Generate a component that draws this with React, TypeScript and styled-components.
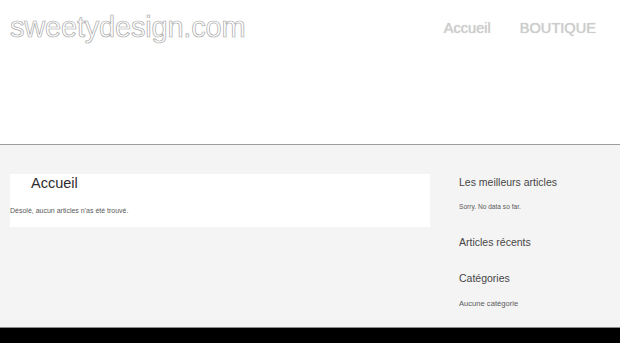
import React from "react";
import styled, { createGlobalStyle } from "styled-components";

const Global = createGlobalStyle`
  html, body { margin: 0; padding: 0; background: #ffffff; }
  body { font-family: "Liberation Sans", Arial, sans-serif; }
  * { box-sizing: border-box; }
`;

const Page = styled.div`
  display: flex;
  flex-direction: column;
  min-height: 343px;
`;

const Header = styled.header`
  height: 145px;
  border-bottom: 1px solid #9c9c9c;
  background: #ffffff;
  display: flex;
  justify-content: space-between;
  align-items: flex-start;
  padding: 10px 24px 0 10px;
`;

const Logo = styled.div`
  font-size: 29px;
  line-height: 34px;
  color: #ffffff;
  -webkit-text-stroke: 0.7px #a9a9a9;
  letter-spacing: -0.2px;
`;

const Nav = styled.nav`
  display: flex;
  gap: 29px;
  margin-top: 9px;
`;

const NavLink = styled.a`
  font-size: 14.6px;
  line-height: 18px;
  color: #cdcdcd;
  text-shadow: 0 0 1px #c4c4c4;
  text-decoration: none;
`;

const Main = styled.main`
  height: 183px;
  background: #f4f4f4;
  border-bottom: 1px solid #8a8a8a;
  display: flex;
  align-items: flex-start;
  padding: 29px 0 0 10px;
  gap: 29px;
`;

const Card = styled.section`
  width: 420px;
  height: 53px;
  background: #ffffff;
  padding-top: 1px;
`;

const CardTitle = styled.h1`
  margin: 0 0 14px 0;
  padding-left: 21px;
  font-size: 14.5px;
  line-height: 17px;
  font-weight: normal;
  color: #2e2e2e;
`;

const SmallText = styled.p<{ $size: number; $mt?: number }>`
  margin: ${(p) => p.$mt ?? 0}px 0 0 0;
  font-size: ${(p) => p.$size}px;
  line-height: ${(p) => Math.ceil(p.$size + 1.2)}px;
  color: #5a5a5a;
`;

const Sidebar = styled.aside`
  flex: 1;
  padding-top: 2px;
  display: flex;
  flex-direction: column;
`;

const WidgetTitle = styled.h2<{ $mt?: number }>`
  margin: ${(p) => p.$mt ?? 0}px 0 0 0;
  font-size: 10.5px;
  line-height: 13px;
  font-weight: normal;
  color: #464646;
`;

const Footer = styled.footer`
  flex: 1;
  min-height: 15px;
  background: #000000;
`;

export default function App() {
  return (
    <Page>
      <Global />
      <Header>
        <Logo>sweetydesign.com</Logo>
        <Nav>
          <NavLink href="#">Accueil</NavLink>
          <NavLink href="#">BOUTIQUE</NavLink>
        </Nav>
      </Header>
      <Main>
        <Card>
          <CardTitle>Accueil</CardTitle>
          <SmallText $size={7}>Désolé, aucun articles n'as été trouvé.</SmallText>
        </Card>
        <Sidebar>
          <WidgetTitle>Les meilleurs articles</WidgetTitle>
          <SmallText $size={6.6} $mt={14}>Sorry. No data so far.</SmallText>
          <WidgetTitle $mt={25}>Articles récents</WidgetTitle>
          <WidgetTitle $mt={22.5}>Catégories</WidgetTitle>
          <SmallText $size={7.6} $mt={14.5}>Aucune catégorie</SmallText>
        </Sidebar>
      </Main>
      <Footer />
    </Page>
  );
}
